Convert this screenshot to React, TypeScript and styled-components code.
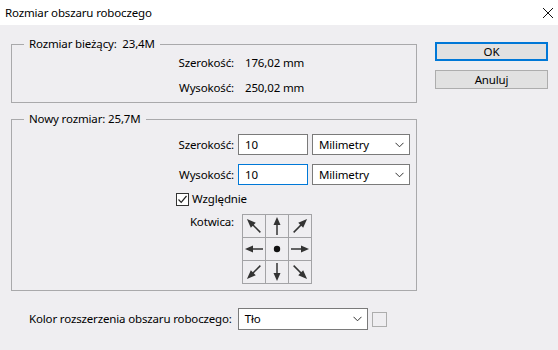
import React from "react";
import styled, { createGlobalStyle } from "styled-components";

const GlobalStyle = createGlobalStyle`
  html, body { margin: 0; padding: 0; }
  body {
    font-family: "Noto Sans", "Open Sans", sans-serif;
    font-size: 11.5px;
    letter-spacing: -0.15px;
    color: #000;
    background: #efeef1;
  }
`;

const Window = styled.div`
  width: 558px;
  height: 350px;
  background: #efeef1;
  display: flex;
  flex-direction: column;
  overflow: hidden;
`;

const TitleBar = styled.div`
  height: 25px;
  background: #ffffff;
  display: flex;
  align-items: center;
  justify-content: space-between;
  padding-left: 5px;
  flex-shrink: 0;
`;

const Title = styled.span`
  font-size: 11.5px;
  line-height: 16px;
`;

const CloseBox = styled.div`
  width: 46px;
  height: 25px;
  display: flex;
  align-items: center;
  justify-content: center;
  margin-right: -13px;
`;

const Body = styled.div`
  display: flex;
  padding: 11px 0 0 11px;
`;

const LeftCol = styled.div`
  width: 406px;
  display: flex;
  flex-direction: column;
  gap: 8px;
`;

const RightCol = styled.div`
  margin-left: 18px;
  padding-top: 6px;
  display: flex;
  flex-direction: column;
  gap: 9px;
`;

const Button = styled.button<{ $default?: boolean }>`
  width: 113px;
  height: 19px;
  box-sizing: border-box;
  margin: 0;
  padding: 0;
  font-family: inherit;
  font-size: 11.5px;
  letter-spacing: -0.15px;
  line-height: 14px;
  color: #000;
  background: #e1e1e1;
  border: ${(p) => (p.$default ? "2px solid #0078d7" : "1px solid #adadad")};
`;

const Group = styled.fieldset`
  margin: 0;
  padding: 0;
  min-width: 0;
  border: 1px solid #a9a9ab;
`;

const Legend = styled.legend`
  margin-left: 12px;
  padding: 0 5px;
  line-height: 16px;
  white-space: pre;
`;

const InfoGrid = styled.div`
  display: grid;
  grid-template-columns: 222px auto;
  column-gap: 11px;
  row-gap: 9px;
  padding: 3px 0 6px 0;
  line-height: 16px;
`;

const RightLabel = styled.span<{ $width?: number }>`
  text-align: right;
  ${(p) => (p.$width ? `width: ${p.$width}px; flex-shrink: 0;` : "")}
`;

const NewContent = styled.div`
  display: flex;
  flex-direction: column;
  padding: 7px 0 6px 0;
`;

const FieldRow = styled.div<{ $mt?: number }>`
  display: flex;
  align-items: center;
  gap: 4px;
  margin-top: ${(p) => p.$mt ?? 0}px;
  line-height: 16px;
`;

const TextInput = styled.div<{ $focused?: boolean }>`
  width: 70px;
  height: 21px;
  box-sizing: border-box;
  background: #fff;
  border: 1px solid ${(p) => (p.$focused ? "#0078d7" : "#7a7a7a")};
  padding-left: 6px;
  display: flex;
  align-items: center;
`;

const Select = styled.div<{ $width: number; $height?: number }>`
  width: ${(p) => p.$width}px;
  height: ${(p) => p.$height ?? 21}px;
  box-sizing: border-box;
  background: #fff;
  border: 1px solid #7a7a7a;
  padding: 0 5px 0 6px;
  display: flex;
  align-items: center;
  justify-content: space-between;
`;

const CheckRow = styled.label`
  display: flex;
  align-items: center;
  gap: 3px;
  margin-top: 6px;
  padding-left: 164px;
  line-height: 16px;
`;

const CheckBox = styled.span`
  width: 13px;
  height: 13px;
  box-sizing: border-box;
  border: 1px solid #333;
  background: #fff;
  display: flex;
  align-items: center;
  justify-content: center;
`;

const AnchorRow = styled.div`
  display: flex;
  align-items: flex-start;
  gap: 8px;
  margin-top: 7px;
  line-height: 16px;
`;

const AnchorLabel = styled.span`
  width: 222px;
  text-align: right;
  padding-top: 0px;
`;

const AnchorGrid = styled.div`
  display: grid;
  grid-template-columns: repeat(3, 22px);
  grid-template-rows: repeat(3, 22px);
  gap: 1px;
  padding: 1px;
  background: #a3a3a6;
`;

const AnchorCell = styled.div`
  background: #efeef1;
  display: flex;
  align-items: center;
  justify-content: center;
`;

const BottomRow = styled.div`
  display: flex;
  align-items: center;
  margin-top: 17px;
  padding-left: 29px;
  line-height: 16px;
`;

const BottomLabel = styled.span`
  margin-right: 6px;
`;

const Swatch = styled.span`
  width: 15px;
  height: 15px;
  box-sizing: border-box;
  border: 1px solid #adadad;
  background: #efeef1;
  margin-left: 4px;
`;

const Chevron = () => (
  <svg width="9" height="6" viewBox="0 0 9 6">
    <path d="M0.5 0.8 L4.5 4.8 L8.5 0.8" fill="none" stroke="#333" strokeWidth="1" />
  </svg>
);

const Arrow = ({ angle, diag }: { angle: number; diag?: boolean }) => (
  <svg width="22" height="22" viewBox="0 0 22 22">
    <g transform={`rotate(${angle} 11 11)`}>
      {diag ? (
        <>
          <line x1="2" y1="11" x2="14" y2="11" stroke="#333" strokeWidth="1.5" />
          <polygon points="12,7.5 21,11 12,14.5" fill="#333" />
        </>
      ) : (
        <>
          <line x1="2" y1="11" x2="13" y2="11" stroke="#333" strokeWidth="1.5" />
          <polygon points="12,7.5 20,11 12,14.5" fill="#333" />
        </>
      )}
    </g>
  </svg>
);

const Dot = () => (
  <svg width="22" height="22" viewBox="0 0 22 22">
    <circle cx="11" cy="11" r="3.2" fill="#111" />
  </svg>
);

const anchors: Array<{ angle: number | null; diag?: boolean }> = [
  { angle: 225, diag: true },
  { angle: 270 },
  { angle: 315, diag: true },
  { angle: 180 },
  { angle: null },
  { angle: 0 },
  { angle: 135, diag: true },
  { angle: 90 },
  { angle: 45, diag: true },
];

export default function App() {
  return (
    <>
      <GlobalStyle />
      <Window>
        <TitleBar>
          <Title>Rozmiar obszaru roboczego</Title>
          <CloseBox>
            <svg width="10" height="10" viewBox="0 0 10 10">
              <path d="M0 0 L10 10 M10 0 L0 10" stroke="#111" strokeWidth="1" />
            </svg>
          </CloseBox>
        </TitleBar>
        <Body>
          <LeftCol>
            <Group>
              <Legend>{"Rozmiar bieżący:  23,4M"}</Legend>
              <InfoGrid>
                <RightLabel>Szerokość:</RightLabel>
                <span>176,02 mm</span>
                <RightLabel>Wysokość:</RightLabel>
                <span>250,02 mm</span>
              </InfoGrid>
            </Group>
            <Group>
              <Legend>{"Nowy rozmiar: 25,7M"}</Legend>
              <NewContent>
                <FieldRow>
                  <RightLabel $width={222}>Szerokość:</RightLabel>
                  <TextInput>10</TextInput>
                  <Select $width={98}>
                    <span>Milimetry</span>
                    <Chevron />
                  </Select>
                </FieldRow>
                <FieldRow $mt={9}>
                  <RightLabel $width={222}>Wysokość:</RightLabel>
                  <TextInput $focused>10</TextInput>
                  <Select $width={98}>
                    <span>Milimetry</span>
                    <Chevron />
                  </Select>
                </FieldRow>
                <CheckRow>
                  <CheckBox>
                    <svg width="11" height="11" viewBox="0 0 11 11">
                      <path d="M1.5 5.5 L4.2 8.3 L9.5 2" fill="none" stroke="#222" strokeWidth="1.2" />
                    </svg>
                  </CheckBox>
                  <span>Względnie</span>
                </CheckRow>
                <AnchorRow>
                  <AnchorLabel>Kotwica:</AnchorLabel>
                  <AnchorGrid>
                    {anchors.map((a, i) => (
                      <AnchorCell key={i}>
                        {a.angle === null ? <Dot /> : <Arrow angle={a.angle} diag={a.diag} />}
                      </AnchorCell>
                    ))}
                  </AnchorGrid>
                </AnchorRow>
              </NewContent>
            </Group>
          </LeftCol>
          <RightCol>
            <Button $default>OK</Button>
            <Button>Anuluj</Button>
          </RightCol>
        </Body>
        <BottomRow>
          <BottomLabel>Kolor rozszerzenia obszaru roboczego:</BottomLabel>
          <Select $width={130} $height={22}>
            <span>Tło</span>
            <Chevron />
          </Select>
          <Swatch />
        </BottomRow>
      </Window>
    </>
  );
}
